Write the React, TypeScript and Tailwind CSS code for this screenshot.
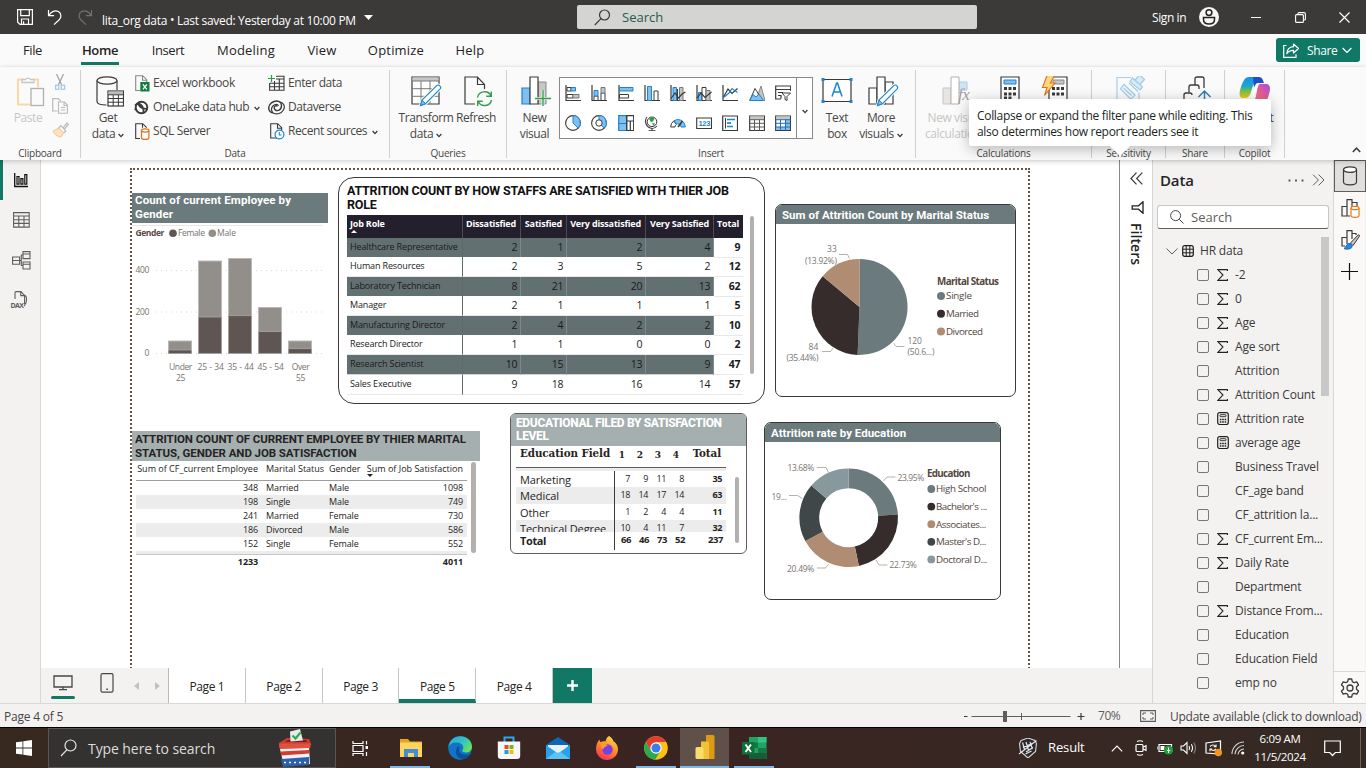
import React from "react";

type Kids = { children?: React.ReactNode };

function Svg({ w, h, vb, className = "", children }: { w: number; h: number; vb?: string; className?: string } & Kids) {
  return (
    <svg width={w} height={h} viewBox={vb ?? `0 0 ${w} ${h}`} fill="none" className={`block shrink-0 ${className}`}>
      {children}
    </svg>
  );
}

const INK = "#3b3a39";
const BLUE = "#1a86d0";
const SKY = "#83beec";

function Chevron({ className = "" }: { className?: string }) {
  return (
    <Svg w={6} h={5} className={className}>
      <path d="M.6 1 3 3.6 5.4 1" stroke={INK} strokeWidth="1.3" />
    </Svg>
  );
}

/* ---------- title bar ---------- */

function TitleBar() {
  return (
    <header className="flex h-[34px] shrink-0 items-center bg-[#3b3a39] text-white">
      <Svg w={16} h={16} className="ml-[17px]">
        <path d="M.6.6h14.8v14.8H3L.6 13zM3.7.6v6h8.6v-6M4.5 15.4V10h7v5.4M6.6 12.2v3" stroke="#fff" strokeWidth="1.2" />
      </Svg>
      <Svg w={16} h={16} className="ml-[14px]">
        <path d="M1.5 1v5.6h5.6M1.8 6.4C4 2.6 8 .6 11.4 2.6c3 1.900 3.300 5.700.8 8.100L7 15.600" stroke="#fff" strokeWidth="1.2" />
      </Svg>
      <Svg w={16} h={16} className="ml-[14px]">
        <path d="M14.500 1v5.600H8.900M14.200 6.400C12 2.600 8 .6 4.600 2.600c-3 1.900-3.300 5.700-.8 8.100L9 15.600" stroke="#737170" strokeWidth="1.200" />
      </Svg>
      <span className="mt-[8px] ml-[9px] w-[255px] text-[12px] tracking-[-0.025em] whitespace-nowrap">
        lita_org data <span className="relative -top-px">•</span> Last saved: Yesterday at 10:00 PM
      </span>
      <Svg w={9} h={5} className="ml-[7px]">
        <path d="M0 0h9L4.500 5z" fill="#fff" />
      </Svg>
      <div className="ml-[204px] flex h-6 w-[400px] items-center rounded-[2px] bg-[#d4d4d2]">
        <Svg w={17} h={17} className="ml-[17px]">
          <circle cx="10.500" cy="6" r="5" stroke="#3b3a39" strokeWidth="1.200" />
          <path d="M7 9.700.8 16" stroke="#3b3a39" strokeWidth="1.200" />
        </Svg>
        <span className="mt-px ml-[11px] text-[13px] tracking-[0em] text-[#1f5c4d]">Search</span>
      </div>
      <span className="mt-[2px] ml-[175px] w-[37px] text-[12px] whitespace-nowrap">Sign in</span>
      <Svg w={20} h={20} className="ml-[10px]">
        <circle cx="10" cy="10" r="10" fill="#f6f5f4" />
        <circle cx="10" cy="5.600" r="2.900" stroke="#222" strokeWidth="1.500" />
        <path d="M4.500 10.500h11v2.200c0 2.600-2.400 4.200-5.500 4.200s-5.500-1.600-5.500-4.200z" stroke="#222" strokeWidth="1.500" />
      </Svg>
      <Svg w={10} h={10} className="ml-[32px]">
        <path d="M0 5.500h10" stroke="#fff" />
      </Svg>
      <Svg w={11} h={11} className="ml-[34px]">
        <rect x=".6" y="2.600" width="7.800" height="7.800" rx="1" stroke="#fff" strokeWidth="1.100" />
        <path d="M3 2.400V1.600q0-1 1-1h5q1.400 0 1.400 1.400V7q0 1-1.400 1" stroke="#fff" strokeWidth="1.100" />
      </Svg>
      <Svg w={11} h={11} className="ml-[33px]">
        <path d="M.5.5l10 10M10.500.5l-10 10" stroke="#fff" strokeWidth="1.200" />
      </Svg>
    </header>
  );
}

/* ---------- ribbon ---------- */

const ribbonTabs: [string, string][] = [
  ["File", "w-[35px] ml-[15px]"],
  ["Home", "w-[38px] ml-[31px] font-semibold"],
  ["Insert", "w-[46px] ml-[26px]"],
  ["Modeling", "w-[70px] ml-[20px] tracking-[0.015em]"],
  ["View", "w-[40px] ml-[21px] tracking-[0.015em]"],
  ["Optimize", "w-[66px] ml-[21px] tracking-[0.015em]"],
  ["Help", "w-[40px] ml-[21px] tracking-[0.015em]"],
];

function RibbonTabs() {
  return (
    <nav className="flex h-[33px] shrink-0 items-stretch bg-[#fafafa] text-[13px] text-[#242424]">
      {ribbonTabs.map(([t, c]) => (
        <div key={t} className={`flex flex-col items-center whitespace-nowrap ${c}`}>
          <span className="mt-[6px] leading-5">{t}</span>
          {t === "Home" && <span className="mt-[2px] h-[3px] w-[38px] bg-[#117865]" />}
        </div>
      ))}
      <div className="mt-1 mr-[6px] ml-auto flex h-6 w-[84px] items-center rounded-[3px] bg-[#117865] text-[12px] text-white">
        <Svg w={17} h={15} className="ml-[7px]">
          <path d="M3.500 2.500H.7v11.800H13v-3" stroke="#fff" strokeWidth="1.200" />
          <path d="M10.500 1l5 4.500-5 4.500V7.400C7 7.300 5.200 8.500 3.800 10.700 4 7 6.300 4 10.500 3.700z" stroke="#fff" strokeWidth="1.200" strokeLinejoin="round" />
        </Svg>
        <span className="mt-[2px] ml-[7px] w-[31px]">Share</span>
        <Svg w={10} h={7} className="ml-[4px]">
          <path d="M.6 1 5 5.500 9.400 1" stroke="#fff" strokeWidth="1.200" />
        </Svg>
      </div>
    </nav>
  );
}

function Group({ label, className, children }: { label: string; className: string } & Kids) {
  return (
    <section className={`flex h-[88px] shrink-0 flex-col border-r border-[#d2d0ce] ${className}`}>
      <div className="flex h-[79px] items-start">{children}</div>
      <div className="text-center text-[10px] leading-[9px] tracking-[-0.02em] text-[#484644]">{label}</div>
    </section>
  );
}

function Big({ icon, lines, chevron, className }: { icon: React.ReactNode; lines: string[]; chevron?: boolean; className: string }) {
  return (
    <div className={`flex shrink-0 flex-col items-center pt-[6px] text-[12px] leading-4 text-[#484644] ${className}`}>
      <div className="flex h-[34px] items-start">{icon}</div>
      {lines.map((l, i) => (
        <span key={l} className="flex items-center whitespace-nowrap">
          {l}
          {chevron && i === lines.length - 1 && <Chevron className="mt-[3px] ml-[3px]" />}
        </span>
      ))}
    </div>
  );
}

function Row({ icon, text, chevron, wide }: { icon: React.ReactNode; text: string; chevron?: boolean; wide?: boolean }) {
  return (
    <div className="flex h-6 items-center text-[12px] whitespace-nowrap text-[#484644]">
      <span className={`flex items-center ${wide ? "w-[20px]" : "w-[18px]"}`}>{icon}</span>
      <span>{text}</span>
      {chevron && <Chevron className="mt-[2px] ml-[5px]" />}
    </div>
  );
}

const PasteIcon = (
  <Svg w={28} h={31}>
    <path d="M6 3.500H1v25h12M17 3.500h4v8" stroke="#fad7a5" strokeWidth="2" />
    <path d="M5 6.500v-3h3.500a3 3 0 0 1 5 0H17v3z" stroke="#c8c6c4" strokeWidth="1.300" />
    <rect x="14" y="12.500" width="12.500" height="17" fill="#fafafa" stroke="#b3b0ad" strokeWidth="1.300" />
  </Svg>
);

function ClipboardGroup() {
  return (
    <Group label="Clipboard" className="w-[81px]">
      <div className="ml-[16px] flex w-[30px] flex-col items-center pt-[6px]">
        {PasteIcon}
        <span className="mt-px -ml-[6px] text-[12px] leading-5 text-[#c8c6c4]">Paste</span>
      </div>
      <div className="ml-[6px] flex flex-col gap-2 pt-[4px]">
        <Svg w={16} h={16}>
          <path d="M4.500 0l5.200 11M11.500 0 6.300 11" stroke="#a19f9d" strokeWidth="1.200" />
          <rect x="3.600" y="11.300" width="3.300" height="4" stroke="#a6cbe9" strokeWidth="1.300" />
          <rect x="9.300" y="11.300" width="3.300" height="4" stroke="#a6cbe9" strokeWidth="1.300" />
        </Svg>
        <Svg w={16} h={16}>
          <path d="M5.500 13H.7V.7h5.500L9 3.500" stroke="#bdbbb9" strokeWidth="1.200" />
          <path d="M6.500 4h6l2.900 3v8.300H6.500zM12 4v3.500h3.400M8.800 9.500h4.500M8.800 12h4.500" stroke="#bdbbb9" strokeWidth="1.100" />
        </Svg>
        <Svg w={17} h={16}>
          <path d="M1 9l6-3 4.500 5L9 15C5 14.800 2.400 12.500 1 9z" fill="#fde3c4" stroke="#f3c291" />
          <path d="M6.500 6 8.800 3.700l5 5.200-2.300 2.200M11 5.800 15 1l1.300 1.300L12.500 7" stroke="#bdbbb9" strokeWidth="1.200" />
        </Svg>
      </div>
    </Group>
  );
}

const docPath = "M8 15H.7V.7h7l4 4V7M7.500.7v4.500H12";

function DataGroup() {
  return (
    <Group label="Data" className="w-[309px]">
      <Big
        className="ml-[4px] w-[46px]"
        lines={["Get", "data"]}
        chevron
        icon={
          <Svg w={28} h={31} className="ml-[4px]">
            <ellipse cx="11" cy="4.500" rx="10" ry="3.700" stroke={INK} strokeWidth="1.200" />
            <path d="M1 4.500v21c0 2 4 3.500 9.500 3.500M21 4.500V14" stroke={INK} strokeWidth="1.200" />
            <rect x="12" y="15" width="15.500" height="15" fill="#fff" stroke={INK} strokeWidth="1.200" />
            <rect x="12.500" y="15.500" width="14.500" height="3" fill="#bdbbb9" />
            <path d="M12 18.800h15.500M12 22.500h15.500M12 26.200h15.500M17.200 19v11M22.400 19v11" stroke={INK} />
          </Svg>
        }
      />
      <div className="ml-[4px] flex w-[133px] flex-col pt-px">
        <Row
          text="Excel workbook"
          icon={
            <Svg w={15} h={17}>
              <path d="M5 15.500H.7V.7h7l4 4V7M7.500.7v4.500H12" stroke="#8a8886" strokeWidth="1.100" />
              <rect x="5.300" y="7" width="9.200" height="9.500" fill="#107c41" />
              <path d="M7.900 9.300l4 5M11.900 9.300l-4 5" stroke="#fff" strokeWidth="1.300" />
            </Svg>
          }
        />
        <Row
          text="OneLake data hub"
          chevron
          icon={
            <Svg w={15} h={15} className="-ml-px">
              <circle cx="7.500" cy="7.500" r="5.800" stroke={INK} strokeWidth="1.900" />
              <path d="M1 5.500C4 2 10 4 9.500 13M4 3.500c2 4 5 6 9.800 5M.5 9l2.500 1" stroke={INK} strokeWidth="1.700" />
            </Svg>
          }
        />
        <Row
          text="SQL Server"
          icon={
            <Svg w={15} h={17}>
              <path d="M5 15.500H.7V.7h7l4 4M7.500.7v4" stroke={INK} strokeWidth="1.100" />
              <path d="M6.500 7.500v7.200c0 1 1.600 1.700 3.700 1.700s3.700-.7 3.700-1.700V7.500" fill="#fff" stroke="#d9731a" strokeWidth="1.200" />
              <ellipse cx="10.200" cy="7.500" rx="3.700" ry="1.600" fill="#fff" stroke="#d9731a" strokeWidth="1.200" />
            </Svg>
          }
        />
      </div>
      <div className="flex flex-col pt-px">
        <Row
          wide
          text="Enter data"
          icon={
            <Svg w={17} h={16}>
              <path d="M8 1.200h8v14H1.600V8M8 4h8M2 8.200h14M2 11.700h14M6.500 6v9M11.300 4v11" stroke={INK} strokeWidth="1.100" />
              <path d="M3.500 0v7M0 3.500h7" stroke="#2f9e44" strokeWidth="1.200" />
            </Svg>
          }
        />
        <Row
          wide
          text="Dataverse"
          icon={
            <Svg w={17} h={15}>
              <path d="M5 12.800C1 12.500-.3 8.300 1.600 5 3.600 1.500 8 .2 11.300 1.700c3 1.500 3 6.800-.3 8.500-2.300 1-4.800 0-4.800-2.600 0-1.700 2.300-2.700 3.300-1.300" stroke={INK} strokeWidth="1.400" />
              <path d="M12 2.200c4 .3 5.300 4.500 3.400 7.800-2 3.500-6.400 4.800-9.700 3.300-2.600-1.300-3-5.300-.6-7.500 2-2 4.600-2 5.400 0" stroke={INK} strokeWidth="1.200" />
            </Svg>
          }
        />
        <Row
          wide
          text="Recent sources"
          chevron
          icon={
            <Svg w={15} h={17} className="ml-[2px]">
              <path d={docPath} stroke={INK} strokeWidth="1.100" />
              <circle cx="9.500" cy="11.500" r="4.400" fill="#fff" stroke={BLUE} strokeWidth="1.200" />
              <path d="M9.300 9v3h2.300" stroke={BLUE} strokeWidth="1.100" />
            </Svg>
          }
        />
      </div>
    </Group>
  );
}

const Pencil = (
  <g>
    <path d="M9.500 29.500l1.500-5.500L25.500 9.800c1-1 2.500-1 3.400 0 1 1 1 2.300 0 3.300L14.500 27.700z" fill="#fff" stroke="#fafafa" strokeWidth="3" />
    <path d="M9.500 29.500l1.500-5.500L25.500 9.800c1-1 2.500-1 3.400 0 1 1 1 2.300 0 3.300L14.500 27.700z" fill="#fff" stroke={BLUE} strokeWidth="1.100" />
    <path d="M9.500 29.500l1.500-5.500 3.500 3.700z" fill={SKY} stroke={BLUE} />
  </g>
);

function QueriesGroup() {
  return (
    <Group label="Queries" className="w-[117px]">
      <Big
        className="ml-[5px] w-[62px]"
        lines={["Transform", "data"]}
        chevron
        icon={
          <Svg w={31} h={31}>
            <path d="M1 1h27v27H1z" fill="#fff" stroke={INK} strokeWidth="1.200" />
            <path d="M1.500 1.500h26v3.500h-26z" fill="#c8c6c4" />
            <path d="M1 5h27M1 12.700h27M1 20.300h27M10 5v23M19 5v23" stroke="#7a7876" />
            {Pencil}
          </Svg>
        }
      />
      <Big
        className="-ml-[3px] w-[44px]"
        lines={["Refresh"]}
        icon={
          <Svg w={30} h={31} className="ml-[5px]">
            <path d="M11 28H1V1h12.500l7 7.500V13M13.500 1v7.500h7" stroke={INK} strokeWidth="1.200" />
            <path d="M13.500 21.500c1.300-7 11-7.500 13.300-1.700M27.500 24c-1.300 6.500-10.500 7.500-13.300 1.500M27.300 15.500v4.800h-5M13.700 30v-4.800h5" stroke="#3a9a4e" strokeWidth="1.400" />
          </Svg>
        }
      />
    </Group>
  );
}

const axis = <path d="M1 0v15.500h15" stroke={INK} strokeWidth="1.200" />;
const gallery: React.ReactNode[] = [
  <>{axis}<path d="M2 2.500h4v3.500H2z" fill="#fff" stroke={INK} /><path d="M6 2.500h4.500v3.500H6z" fill={SKY} stroke={BLUE} /><path d="M2 9.500h6V13H2z" fill="#fff" stroke={INK} /><path d="M8 9.500h6V13H8z" fill="#c8c6c4" stroke="#7a7876" /></>,
  <>{axis}<path d="M3 11h4v4.500H3z" fill="#fff" stroke={INK} /><path d="M3 5.500h4V11H3z" fill={SKY} stroke={BLUE} /><path d="M10 8h4v7.500h-4z" fill="#fff" stroke={INK} /><path d="M10 2.500h4V8h-4z" fill="#c8c6c4" stroke="#7a7876" /></>,
  <>{axis}<path d="M1.500 2.500H15V6H1.500z" fill={SKY} stroke={BLUE} /><path d="M1.500 9.500h9V13h-9z" fill="#fff" stroke={INK} /></>,
  <>{axis}<path d="M3.500 1.500h4v14h-4z" fill={SKY} stroke={BLUE} /><path d="M10 6h4v9.500h-4z" fill="#fff" stroke={INK} /></>,
  <>{axis}<path d="M3 2.500h3.500v13H3z" fill={SKY} stroke={BLUE} /><path d="M9.500 2.500H13v13H9.500z" fill="#c8c6c4" stroke="#7a7876" /><path d="M1 13.500 5 8l3.500 5L12 9l3.500-2" stroke={INK} strokeWidth="1.200" /><path d="M7.500 4v11" stroke={INK} /></>,
  <>{axis}<path d="M2.500 7.500H6v8H2.500z" fill={SKY} stroke={BLUE} /><path d="M6 2.500h4v13H6z" fill="#fff" stroke={INK} /><path d="M10 5.500h4v10h-4z" fill="#c8c6c4" stroke="#7a7876" /><path d="M1 13 5 8l4 4.500L15.500 7" stroke={INK} strokeWidth="1.200" /></>,
  <>{axis}<path d="M1.500 12 6 4l4 4.500 5.500-5" stroke={INK} strokeWidth="1.200" /><path d="M1.500 12.500 7 8l3-4.500 5.500 4" stroke={BLUE} strokeWidth="1.200" /></>,
  <><path d="M7 15.500 12 1l4 14.500z" fill="#c8c6c4" stroke="#8a8886" /><path d="M.7 15.500 6 3.500l4.500 7" stroke={INK} /><path d="M.7 15.500 4 9.500l3 2.500 3-3 4.500 6.500z" fill={SKY} stroke={BLUE} /></>,
  <><path d="M6 14H.7V1h15v5M.7 4.500h15M3 7.500h5M3 10.500h3v3" stroke={INK} strokeWidth="1.200" /><path d="M7 8h8.500L12 11.500v4l-2-1v-3z" fill="#fff" stroke={INK} /></>,
  <><circle cx="8" cy="8" r="7.400" fill="#fff" stroke={INK} strokeWidth="1.100" /><path d="M8 .6A7.400 7.400 0 0 1 13.200 13.200L8 8z" fill={SKY} stroke={BLUE} /></>,
  <><circle cx="8" cy="8" r="7.400" fill="#fff" stroke={INK} strokeWidth="1.100" /><path d="M8 .6A7.400 7.400 0 0 1 13.200 13.200L10 10A3 3 0 0 0 8 5z" fill={SKY} stroke={BLUE} /><circle cx="8" cy="8" r="3.200" fill="#fff" stroke={INK} /></>,
  <><path d="M.7.7h8v14.800h-8z" fill={SKY} stroke={BLUE} strokeWidth="1.200" /><path d="M.7 8.500h8" stroke={BLUE} /><path d="M8.700.7h7v14.800h-7zM8.700 6h7M12.300 6v9.500" stroke={INK} strokeWidth="1.200" /></>,
  <><circle cx="8" cy="6.800" r="4.800" fill="#fff" stroke={INK} /><path d="M5 4c2-2 4-2 5.500-.5L9 6.500 7 7zM8 8l3 .5-1.500 2.500z" fill="#2f9e44" /><path d="M3 2C.6 5 1.200 9.500 4 11.800c2.700 2 6.500 2 9-.8M8 13v2.500M4.500 15.700h7" stroke={INK} strokeWidth="1.100" /></>,
  <><path d="M.7 12a7.300 7.300 0 0 1 3-6l2.600 3.500A3.500 3.500 0 0 0 5 12z" fill="#fff" stroke={INK} /><path d="M4 5.700A7.300 7.300 0 0 1 15.300 12H11A3.500 3.500 0 0 0 6.300 9z" fill={SKY} stroke={BLUE} /><path d="M8 12 12.500 6" stroke={INK} strokeWidth="1.600" /></>,
  <><path d="M.7 3h14.800v10.500H.7z" fill="#fff" stroke={INK} strokeWidth="1.100" /><text x="2.500" y="10.800" fontSize="7.500" fontWeight="700" fill={BLUE} textLength="11.500" className="font-['Liberation_Sans',sans-serif]">123</text></>,
  <><path d="M.7 1h14.800v14.500H.7z" fill="#fff" stroke={INK} strokeWidth="1.200" /><path d="M3.500 3v10.500" stroke={INK} /><path d="M5 4.500h8M5 11.500h6" stroke={BLUE} strokeWidth="1.700" /><path d="M5 8h4" stroke={BLUE} strokeWidth="1.700" /></>,
  <><path d="M.7 1h14.800v14.500H.7z" fill="#fff" stroke={INK} strokeWidth="1.200" /><path d="M1.200 1.500H15v2.700H1.200z" fill="#c8c6c4" /><path d="M.7 4.700h14.800M.7 8.300h14.800M.7 12h14.800M5.500 4.700v11M10.500 4.700v11" stroke="#5c5a58" /></>,
  <><path d="M.7 1h14.800v14.500H.7z" fill="#fff" stroke={INK} strokeWidth="1.200" /><path d="M1.200 1.500H15v2.700H1.200z" fill="#c8c6c4" /><path d="M10.500 4.500H15V15H10.500zM1.200 12H15v3H1.200z" fill={SKY} /><path d="M.7 4.700h14.800M.7 8.300h14.800M.7 12h14.800M5.500 4.700v11M10.500 4.700v11" stroke="#1f6fb2" /></>,
];

function InsertGroup() {
  return (
    <Group label="Insert" className="w-[409px]">
      <Big
        className="ml-[3px] w-[49px]"
        lines={["New", "visual"]}
        icon={
          <Svg w={31} h={31} className="ml-[4px]">
            <path d="M1 12h8v16H1z" fill={SKY} stroke={BLUE} strokeWidth="1.200" />
            <path d="M17 6h8v22h-8z" fill="#c8c6c4" stroke="#8a8886" />
            <path d="M9 1h8v27H9z" fill="#fff" stroke={INK} strokeWidth="1.200" />
            <path d="M22 14v16M14 22.500h16" stroke="#fafafa" strokeWidth="3" strokeOpacity=".8" />
            <path d="M22 14v16M14 22.500h16" stroke="#2f9e44" strokeWidth="1.300" />
          </Svg>
        }
      />
      <div className="mt-[7px] flex h-[62px] w-[254px] shrink-0 border border-[#8a8886] bg-white">
        <div className="grid w-[237px] shrink-0 grid-cols-9 gap-y-px border-r border-[#8a8886] pt-px">
          {gallery.map((g, i) => (
            <span key={i} className="flex h-[28px] items-center justify-center">
              <Svg w={16} h={16}>{g}</Svg>
            </span>
          ))}
        </div>
        <div className="flex flex-1 items-center justify-center pt-[6px]">
          <Chevron />
        </div>
      </div>
      <Big
        className="w-[48px]"
        lines={["Text", "box"]}
        icon={
          <Svg w={32} h={31}>
            <path d="M2 3.500h28v22H2z" fill="#fff" stroke={INK} strokeWidth="1.200" />
            <path d="M11 20.500 15.700 7h.8L21 20.500M12.500 16h7" stroke={BLUE} strokeWidth="1.500" />
            <path d="M.5 2h3v3h-3zM28.500 2h3v3h-3zM.5 24h3v3h-3zM28.500 24h3v3h-3z" fill={BLUE} />
          </Svg>
        }
      />
      <Big
        className="-ml-[4px] w-[48px]"
        lines={["More", "visuals"]}
        chevron
        icon={
          <Svg w={31} h={31} className="ml-[4px]">
            <path d="M1 12h8v16H1zM17 6h8v22h-8z" fill="#fff" stroke={INK} strokeWidth="1.200" />
            <path d="M9 1h8v27H9z" fill="#fff" stroke={INK} strokeWidth="1.200" />
            {Pencil}
          </Svg>
        }
      />
    </Group>
  );
}

function CalcGroups() {
  return (
    <>
      <Group label="Calculations" className="w-[176px]">
        <Big
          className="ml-[5px] w-[74px] [&>span]:-ml-[5px] [&>span]:text-[#c8c6c4]"
          lines={["New visual", "calculations"]}
          icon={
            <Svg w={29} h={31} className="-ml-[4px]">
              <path d="M1 12h8v16H1z" fill="#e6e5e4" stroke="#c8c6c4" />
              <path d="M17 6h8v8h-8z" fill="#cfe4f5" stroke="#a6cbe9" />
              <path d="M9 1h8v27H9z" fill="#fff" stroke="#b3b0ad" />
              <text x="16" y="24" fontSize="17" fontStyle="italic" fill="#a19f9d" className="font-['Liberation_Serif',serif]">fx</text>
            </Svg>
          }
        />
        <Big
          className="w-[30px]"
          lines={[]}
          icon={
            <Svg w={20} h={31}>
              <path d="M1 1h18v28H1z" fill="#fff" stroke={INK} strokeWidth="1.200" />
              <path d="M4 4h12v4H4z" fill={SKY} stroke={BLUE} />
              <path d="M4 12.500h3M8.500 12.500h3M13 12.500h3M4 18h3M8.500 18h3M13 18h3M4 22h3M8.500 22h3" stroke={INK} strokeWidth="2.800" />
            </Svg>
          }
        />
        <Big
          className="-ml-px w-[62px]"
          lines={[]}
          icon={
            <Svg w={28} h={31}>
              <path d="M8 1h18v28H8z" fill="#fff" stroke={INK} strokeWidth="1.200" />
              <path d="M12 4h11v4H12z" fill="#c8c6c4" stroke="#8a8886" />
              <path d="M11 12.500h3M15.500 12.500h3M20 12.500h3M11 18h3M15.500 18h3M20 18h3" stroke={INK} strokeWidth="2.800" />
              <path d="M6-.5h7.500L9.500 7H14L3.500 19.500 6 11.500H1.500z" fill="#fcd57c" stroke="#d9731a" strokeWidth="1.100" />
            </Svg>
          }
        />
      </Group>
      <Group label="Sensitivity" className="w-[74px]">
        <Big
          className="w-[74px]"
          lines={[]}
          icon={
            <Svg w={30} h={31} className="ml-[4px]">
              <path d="M15 1.500H1v27h22v-12" stroke="#a6d0ea" strokeWidth="1.200" />
              <path d="M8 8.500l11 10.500-4 4.500L4.500 13zM7.500 12l8 7.500" stroke="#9fcbe6" fill="#eef6fb" strokeWidth="1.200" />
              <path d="M14 5.500 16.500 2l10 9L24 14zM19 4l4.500-5 5 4.500-4.500 5M13 7l9 8.500" stroke="#9fcbe6" fill="#d8ebf6" strokeWidth="1.200" />
            </Svg>
          }
        />
      </Group>
      <Group label="Share" className="w-[59px]">
        <Big
          className="w-[59px]"
          lines={[]}
          icon={
            <Svg w={28} h={31} className="ml-[3px]">
              <path d="M1 24v-5q0-2 2-2h4q2 0 2 2M6 16V11q0-2 2-2h6q2 0 2 2v2M12 8.500V3q0-2 2-2h5q2 0 2 2v9" stroke={INK} strokeWidth="1.300" />
              <path d="M21.500 28V15M15.500 21l6-6 6 6" stroke="#2b7cb8" strokeWidth="1.500" />
            </Svg>
          }
        />
      </Group>
      <Group label="Copilot" className="w-[60px]">
        <Big
          className="w-[60px]"
          lines={["Copilot"]}
          icon={
            <Svg w={32} h={30} className="mt-px">
              <defs>
                <linearGradient id="cpA" x1="0" y1="0" x2="0" y2="1">
                  <stop offset="0" stopColor="#1b8ff0" /><stop offset=".45" stopColor="#1fa7c8" /><stop offset=".65" stopColor="#6fbf4a" /><stop offset="1" stopColor="#f5c518" />
                </linearGradient>
                <linearGradient id="cpB" x1="1" y1="0" x2="0" y2="1">
                  <stop offset="0" stopColor="#a34bd8" /><stop offset=".4" stopColor="#e05a9c" /><stop offset="1" stopColor="#f7894a" />
                </linearGradient>
              </defs>
              <path d="M10 0h10c-4 1-6 9-8 15-1 4-3 6-6 6H3c-3-1-3-5-1-11S6 0 10 0z" fill="url(#cpA)" />
              <path d="M14 0h6c3 0 4 3 5 6h-6c-2 0-3 2-4 5z" fill="#1f4fc8" />
              <path d="M19 7h9c3 1 4 4 2 10-2 8-4 11-8 11H12c3-1 4-5 5-11s1-9 2-10z" fill="url(#cpB)" />
              <path d="M19 7c-2 0-3 2-3.800 4.500L12.500 21h3.800c1.500-4 1.700-12 4.200-14z" fill="#fff" />
            </Svg>
          }
        />
      </Group>
    </>
  );
}

function Ribbon() {
  return (
    <div className="relative z-20 flex h-[93px] shrink-0 bg-[#fafafa] pt-[3px] shadow-[0_1px_5px_rgba(0,0,0,0.22)]">
      <ClipboardGroup />
      <DataGroup />
      <QueriesGroup />
      <InsertGroup />
      <CalcGroups />
      <Svg w={9} h={6} className="mt-[77px] ml-[67px]">
        <path d="M.8 5 4.500 1.200 8.200 5" stroke={INK} strokeWidth="1.500" />
      </Svg>
      <div className="absolute top-[32px] left-[969px] h-[47px] w-[302px] rounded-[2px] bg-white pt-[9px] pl-[8px] text-[12px] leading-4 tracking-[-0.026em] whitespace-nowrap text-[#201f1e] shadow-[0_3px_14px_rgba(0,0,0,0.28)]">
        Collapse or expand the filter pane while editing. This
        <br />
        also determines how report readers see it
        <Svg w={22} h={11} className="absolute top-[46px] left-[140px]">
          <path d="M0 0h22L11 11z" fill="#fff" />
        </Svg>
      </div>
    </div>
  );
}

/* ---------- left rail ---------- */

function LeftRail() {
  const g = "#605e5c";
  return (
    <aside className="flex w-[41px] shrink-0 flex-col border-r border-[#dad8d6] bg-[#f3f2f1]">
      <div className="flex h-[40px] items-center border-l-[3px] border-[#117865] pl-[11px]">
        <Svg w={14} h={15}>
          <path d="M.7 0v13.500H14" stroke="#111" strokeWidth="1.300" />
          <path d="M3 3.500h2v7.700H3zM6.900 5.700h2v5.500h-2zM10.800 1.700h2v9.500h-2z" stroke="#111" strokeWidth="1.200" />
        </Svg>
      </div>
      <Svg w={17} h={16} className="mt-[12px] ml-[13px]">
        <path d="M.6.6h15.600v14.500H.6zM.6 4h15.600M.6 7.700h15.600M.6 11.400h15.600M5.800 4v11M11 4v11" stroke={g} strokeWidth="1.100" />
      </Svg>
      <Svg w={19} h={19} className="mt-[23px] ml-[12px]">
        <path d="M.6 6h7v7.200h-7zM.6 9.500h7M11 .6h7v7h-7zM11 3h7M11 11h7v7h-7zM11 13.300h7M7.600 9.500H9.300V4H11M9.300 9.500v5H11" stroke={g} strokeWidth="1.100" />
      </Svg>
      <Svg w={20} h={18} className="mt-[21px] ml-[10px]">
        <path d="M5 8V1.600q0-1 1-1h5l3.600 4V13M10.700.6v4h4M14.600 4c1.500 1 2 2 2 4 0 3-.5 5-2.500 7" stroke={g} strokeWidth="1.100" />
        <text x=".5" y="16.500" fontSize="7" fontWeight="700" fill={g} textLength="13">DAX</text>
      </Svg>
    </aside>
  );
}

/* ---------- report visuals ---------- */

const bars = [
  { x: 168.500, top: 341, mid: 350, label: ["Under", "25"] },
  { x: 198.500, top: 261, mid: 317, label: ["25 - 34"] },
  { x: 228.500, top: 258.500, mid: 315.700, label: ["35 - 44"] },
  { x: 258.500, top: 307.500, mid: 331.500, label: ["45 - 54"] },
  { x: 288.500, top: 341, mid: 348.700, label: ["Over", "55"] },
];

function GenderChart() {
  return (
    <div className="absolute top-[23px] left-0 w-[196px]">
      <div className="h-[30px] bg-[#6b7a7c] px-[3px] font-[Roboto,sans-serif] text-[11.500px] leading-[14px] font-bold tracking-[0.01em] text-white">
        Count of current Employee by
        <br />
        Gender
      </div>
      <Svg w={196} h={170} vb="132 223 196 170">
        <path d="M132 225.500h190" stroke="#e9e7e5" />
        <g fontSize="8.500" fill="#777370">
          <text x="135.500" y="236" fontWeight="700" fill="#5b4a45" textLength="28.500">Gender</text>
          <circle cx="173" cy="233.200" r="3.800" fill="#5f5552" />
          <text x="178" y="236" textLength="26.500">Female</text>
          <circle cx="212.300" cy="233.200" r="3.800" fill="#928e8a" />
          <text x="217" y="236" textLength="18.500">Male</text>
          {[["400", 270.500, 135.500], ["200", 312, 135.500], ["0", 353.500, 144.500]].map(([t, y, x]) => (
            <g key={t}>
              <text x={x} y={Number(y) + 2.500}>{t}</text>
              <path d={`M156 ${y}h166`} stroke="#dcdad8" strokeDasharray="1 4" />
            </g>
          ))}
        </g>
        {bars.map((b) => (
          <g key={b.x}>
            <rect x={b.x} y={b.top} width="23" height={353.500 - b.top} fill="#928e8a" stroke="#bcb9b6" />
            <rect x={b.x} y={b.mid} width="23" height={353.500 - b.mid} fill="#5f5552" stroke="#aaa7a4" strokeWidth=".8" />
            {b.label.map((l, i) => (
              <text
                key={l}
                x={b.x + 12}
                y={370 + i * 11}
                textAnchor="middle"
                fontSize="8.500"
                fill="#777370"
                textLength={l.length === 7 ? 26 : undefined}
              >
                {l}
              </text>
            ))}
          </g>
        ))}
      </Svg>
    </div>
  );
}

const roles: [string, number[]][] = [
  ["Healthcare Representative", [2, 1, 2, 4, 9]],
  ["Human Resources", [2, 3, 5, 2, 12]],
  ["Laboratory Technician", [8, 21, 20, 13, 62]],
  ["Manager", [2, 1, 1, 1, 5]],
  ["Manufacturing Director", [2, 4, 2, 2, 10]],
  ["Research Director", [1, 1, 0, 0, 2]],
  ["Research Scientist", [10, 15, 13, 9, 47]],
  ["Sales Executive", [9, 18, 16, 14, 57]],
];
const roleCols = "grid grid-cols-[116px_58px_46px_79px_68px_29px]";

function RoleTable() {
  return (
    <div className="absolute top-[7px] left-[206px] h-[227px] w-[427px] rounded-[16px] border border-[#3b3a39] bg-white pt-[6px] pl-[8px]">
      <div className="font-[Roboto,sans-serif] text-[12.500px] leading-[14px] font-bold tracking-[-0.017em] whitespace-nowrap text-[#111]">
        ATTRITION COUNT BY HOW STAFFS ARE SATISFIED WITH THIER JOB
        <br />
        ROLE
      </div>
      <div className="mt-[3px] flex">
        <div className="w-[396px]">
          <div className={`${roleCols} h-[22.500px] bg-[#231f2d] text-[9px] leading-[17px] font-bold tracking-[-0.02em] whitespace-nowrap text-white`}>
            <span className="flex flex-col border-r border-[#4e4a58] pl-[3px]">
              Job Role
              <Svg w={6} h={3} className="-mt-[2px] ml-px"><path d="M0 3h6L3 0z" fill="#fff" /></Svg>
            </span>
            {["Dissatisfied", "Satisfied", "Very dissatisfied", "Very Satisfied"].map((h) => (
              <span key={h} className="flex justify-end border-r border-[#4e4a58] pr-[4px]">{h}</span>
            ))}
            <span className="flex justify-end pr-[4px]">Total</span>
          </div>
          {roles.map(([name, vals], i) => (
            <div key={name} className={`${roleCols} h-[19.600px] text-[#1a1a1a]`}>
              <span className={`border-r border-b border-r-[#5d6a6c] pl-[3px] text-[9px] leading-[17px] tracking-[-0.015em] whitespace-nowrap ${i % 2 ? "border-b-[#e8e8e8] bg-white" : "border-b-[#d0d4d4] bg-[#637072]"}`}>{name}</span>
              {vals.slice(0, 4).map((v, k) => (
                <span key={k} className={`border-r border-b pr-[3px] text-right text-[10.500px] leading-[19px] ${i % 2 ? "border-r-white border-b-[#e8e8e8] bg-white" : "border-r-[#7d898a] border-b-[#d0d4d4] bg-[#637072]"}`}>{v}</span>
              ))}
              <span className="border-b border-[#e8e8e8] pr-[3px] text-right text-[10.500px] leading-[19px] font-bold">{vals[4]}</span>
            </div>
          ))}
        </div>
        <div className="mt-px ml-[7px] h-[158px] w-[4px] rounded-full bg-[#b3b0ad]" />
      </div>
    </div>
  );
}

function arc(cx: number, cy: number, R: number, r: number, a: number, b: number) {
  const p = (rad: number, t: number) => {
    const th = t * 2 * Math.PI;
    return `${(cx + rad * Math.sin(th)).toFixed(2)} ${(cy - rad * Math.cos(th)).toFixed(2)}`;
  };
  const big = b - a > 0.5 ? 1 : 0;
  return `M${p(R, a)}A${R} ${R} 0 ${big} 1 ${p(R, b)}L${p(r, b)}A${r} ${r} 0 ${big} 0 ${p(r, a)}Z`;
}

function Card({ title, className, children }: { title: string; className: string } & Kids) {
  return (
    <div className={`absolute overflow-hidden rounded-[7px] border border-[#3b3a39] bg-white ${className}`}>
      <div className="h-[19px] bg-[#6b7a7c] pl-[6px] font-[Roboto,sans-serif] text-[11.500px] leading-[20px] font-bold tracking-[0.001em] whitespace-nowrap text-white">
        {title}
      </div>
      {children}
    </div>
  );
}

function MaritalPie() {
  return (
    <Card title="Sum of Attrition Count by Marital Status" className="top-[34px] left-[643px] h-[193px] w-[241px]">
      <Svg w={239} h={172} vb="776 224 239 172">
        <path d={arc(859.500, 307, 48, 0, 0, 0.5063)} fill="#6b7a7c" />
        <path d={arc(859.500, 307, 48, 0, 0.5063, 0.8607)} fill="#352c2b" />
        <path d={arc(859.500, 307, 48, 0, 0.8607, 0.99999)} fill="#b08c73" />
        <path d="M839 254.500h8.500l2 4M822 351.500h8.500l2.500-3.500M893.500 343l2.500 3.500h8.500" stroke="#b9b0aa" />
        <g fontSize="8.500" fill="#7a7573">
          <text x="827" y="252" textLength="9.500">33</text>
          <text x="805" y="264" textLength="31.500">(13.92%)</text>
          <text x="808.500" y="350" textLength="9.500">84</text>
          <text x="786.500" y="361" textLength="31.500">(35.44%)</text>
          <text x="907.500" y="344" textLength="14">120</text>
          <text x="907.500" y="355" textLength="26.500">(50.6...)</text>
        </g>
        <text x="937" y="285" fontSize="9.800" fontWeight="700" fill="#54463f" textLength="61.500">Marital Status</text>
        {[["Single", 296, "#6b7a7c", 25.500], ["Married", 313.700, "#352c2b", 32.500], ["Divorced", 331.500, "#b08c73", 36.500]].map(([t, y, c, l]) => (
          <g key={t}>
            <circle cx="941" cy={y} r="4" fill={String(c)} />
            <text x="946" y={Number(y) + 3.300} fontSize="9.800" fill="#54463f" textLength={l}>{t}</text>
          </g>
        ))}
      </Svg>
    </Card>
  );
}

const eduSlices: [number, string, string, number][] = [
  [23.950, "#6b7a7c", "High School", 50],
  [22.730, "#352c2b", "Bachelor's ...", 51],
  [20.490, "#b08c73", "Associates...", 50],
  [19.150, "#3f4749", "Master's D...", 50],
  [13.680, "#87999d", "Doctoral D...", 51],
];

function EducationDonut() {
  let at = 0;
  return (
    <Card title="Attrition rate by Education" className="top-[252px] left-[632px] h-[178px] w-[237px]">
      <Svg w={235} h={157} vb="765 442 235 157">
        {eduSlices.map(([v, c]) => {
          const a = at;
          at += v / 100;
          return <path key={c} d={arc(848.700, 517.700, 49.300, 29.500, a, at)} fill={c} />;
        })}
        <path d="M817 467.500h9l2.500 5M789 495.500h8.500l5 3M817 568h8.500l3-4M883.500 481l3.500-4h8.500M876 560l3 5h8.500" stroke="#b9b0aa" />
        <g fontSize="8.500" fill="#7a7573">
          <text x="787.500" y="471" textLength="26.500">13.68%</text>
          <text x="771.500" y="499.500" textLength="15">19...</text>
          <text x="787" y="572" textLength="27">20.49%</text>
          <text x="897.500" y="481" textLength="26.500">23.95%</text>
          <text x="889.500" y="568" textLength="27">22.73%</text>
        </g>
        <text x="927" y="477" fontSize="9.800" fontWeight="700" fill="#54463f" textLength="43">Education</text>
        {eduSlices.map(([, c, t, l], i) => (
          <g key={t}>
            <circle cx="931.300" cy={489 + i * 17.600} r="3.900" fill={c} />
            <text x="936" y={492.300 + i * 17.700} fontSize="9.800" fill="#54463f" textLength={l}>{t}</text>
          </g>
        ))}
      </Svg>
    </Card>
  );
}

const statusRows = [
  ["348", "Married", "Male", "1098"],
  ["198", "Single", "Male", "749"],
  ["241", "Married", "Female", "730"],
  ["186", "Divorced", "Male", "586"],
  ["152", "Single", "Female", "552"],
];
const statusCols = "grid grid-cols-[126px_63px_38px_104px] [&>span]:px-[4px]";

function StatusTable() {
  return (
    <div className="absolute top-[261px] left-0 w-[348px]">
      <div className="h-[30px] bg-[#a5afb0] pt-px pl-[3px] font-[Roboto,sans-serif] text-[11.500px] leading-[14px] font-bold tracking-[-0.006em] whitespace-nowrap text-[#252423]">
        ATTRITION COUNT OF CURRENT EMPLOYEE BY THIER MARITAL
        <br />
        STATUS, GENDER AND JOB SATISFACTION
      </div>
      <div className="flex pl-[4px]">
        <div className="w-[331px] text-[9px] tracking-[-0.012em] whitespace-nowrap text-[#252423]">
          <div className={`${statusCols} h-[20px] border-b border-[#a19f9d] leading-[15px] tracking-[0.001em]`}>
            <span className="flex justify-end">Sum of CF_current Employee</span>
            <span>Marital Status</span>
            <span>Gender</span>
            <span className="flex flex-col items-end">
              Sum of Job Satisfaction
              <Svg w={6} h={3} className="-mt-[2px] mr-[90px]"><path d="M0 0h6L3 3z" fill="#252423" /></Svg>
            </span>
          </div>
          {statusRows.map((r, i) => (
            <div key={r[0]} className={`${statusCols} h-[14px] leading-[14px] ${i % 2 ? "bg-[#ececec]" : ""}`}>
              <span className="text-right">{r[0]}</span>
              <span>{r[1]}</span>
              <span>{r[2]}</span>
              <span className="text-right">{r[3]}</span>
            </div>
          ))}
          <div className="h-[4px] border-b border-[#c8c6c4] bg-[#ececec]" />
          <div className={`${statusCols} leading-[13px] font-bold`}>
            <span className="text-right">1233</span>
            <span />
            <span />
            <span className="text-right">4011</span>
          </div>
        </div>
        <div className="mt-px ml-[4px] h-[91px] w-[5px] rounded-full bg-[#b3b0ad]" />
      </div>
    </div>
  );
}

const fieldRows: [string, number[]][] = [
  ["Marketing", [7, 9, 11, 8, 35]],
  ["Medical", [18, 14, 17, 14, 63]],
  ["Other", [1, 2, 4, 4, 11]],
  ["Technical Degree", [10, 4, 11, 7, 32]],
];
const fieldCols = "grid grid-cols-[99px_19px_18px_18px_18px_38px]";

function FieldTable() {
  return (
    <div className="absolute top-[243px] left-[378px] h-[141px] w-[237px] overflow-hidden rounded-[6px] border border-[#605e5c] bg-white">
      <div className="h-[32px] bg-[#a5afb0] pt-[3px] pl-[5px] font-[Roboto,sans-serif] text-[12px] leading-[13px] font-extrabold tracking-[-0.03em] whitespace-nowrap text-white">
        EDUCATIONAL FILED BY SATISFACTION
        <br />
        LEVEL
      </div>
      <div className="flex">
        <div className="ml-[5px] w-[210px] whitespace-nowrap text-[#252423]">
          <div className={`${fieldCols} h-[22px] border-b border-[#605e5c] font-['DejaVu_Serif_Condensed','DejaVu_Serif',serif] text-[11.500px] leading-[15px] font-bold tracking-[-0.008em]`}>
            <span className="pl-[4px]">Education Field</span>
            {["1", "2", "3", "4"].map((n) => (
              <span key={n} className="pr-[9px] text-right text-[10px] leading-[17px]">{n}</span>
            ))}
            <span className="flex justify-end pr-[5px]">Total</span>
          </div>
          <div className="h-[64px] overflow-hidden">
            <div className="h-[3px] bg-[#ececec]" />
            {fieldRows.map(([n, v], i) => (
              <div key={n} className={`${fieldCols} h-[16.300px] ${i % 2 ? "bg-[#ececec]" : ""}`}>
                <span className="border-r border-[#3b3a39] pl-[4px] text-[11px] leading-[18px] tracking-[-0.01em]">{n}</span>
                {v.map((x, k) => (
                  <span key={k} className={`pr-[4px] text-right text-[9px] leading-[15px] ${k === 4 ? "font-bold" : ""}`}>{x}</span>
                ))}
              </div>
            ))}
          </div>
          <div className={`${fieldCols} h-[16px] font-bold`}>
            <span className="border-r border-[#3b3a39] pl-[4px] text-[11px] leading-[18px]">Total</span>
            {[66, 46, 73, 52, 237].map((x) => (
              <span key={x} className="pr-[3px] text-right text-[9.500px] leading-[15px]">{x}</span>
            ))}
          </div>
        </div>
        <div className="mt-[31px] ml-[9px] h-[66px] w-[4px] rounded-full bg-[#b3b0ad]" />
      </div>
    </div>
  );
}

function Canvas() {
  return (
    <div className="h-[508px] w-[1078px] shrink-0 overflow-hidden bg-white pt-[8px] pl-[89px]">
      <div className="relative h-[640px] w-[900px] border-2 border-dotted border-[#6b5344]">
        <GenderChart />
        <RoleTable />
        <MaritalPie />
        <StatusTable />
        <FieldTable />
        <EducationDonut />
      </div>
    </div>
  );
}

function FiltersPane() {
  return (
    <div className="flex w-[33px] shrink-0 flex-col items-center border-l border-[#8a8886] bg-white">
      <Svg w={13} h={13} className="mt-[12px]">
        <path d="M6.500.7.900 6.500l5.600 5.800M12.300.7 6.700 6.500l5.600 5.800" stroke={INK} strokeWidth="1.200" />
      </Svg>
      <Svg w={13} h={13} className="mt-[16px] ml-[3px]">
        <path d="M12 .8v11.400L7.500 8.200H1.200V4.800h6.300z" stroke="#201f1e" strokeWidth="1.300" />
      </Svg>
      <span className="mt-[9px] -ml-px text-[14px] leading-5 font-semibold tracking-[0.005em] text-[#252423] [writing-mode:vertical-rl]">Filters</span>
    </div>
  );
}

function PageTabs() {
  return (
    <div className="flex h-[35px] shrink-0 bg-[#f3f2f1] text-[12px] text-[#252423]">
      <div className="ml-[10px] flex w-6 flex-col items-center">
        <Svg w={20} h={16} className="mt-[7px] -ml-px">
          <path d="M1 1h18v11H1zM10 12v2.500M6 14.700h8" stroke="#484644" strokeWidth="1.300" />
        </Svg>
        <span className="mt-[5px] h-[3px] w-6 rounded-sm bg-[#117865]" />
      </div>
      <Svg w={14} h={20} className="mt-[5px] ml-[25px]">
        <rect x="1" y=".7" width="12" height="18.500" rx="1.500" stroke="#484644" strokeWidth="1.200" />
        <path d="M6.300 16.300h1.600" stroke="#484644" strokeWidth="1.600" />
      </Svg>
      <Svg w={27} h={8} className="mt-[14px] ml-[19px]">
        <path d="M6 0v8L1 4zM22 0v8l5-4z" fill="#c3c1bf" />
      </Svg>
      <div className="ml-[8px] flex border-l border-[#bdbbb9]">
        {["Page 1", "Page 2", "Page 3", "Page 5", "Page 4"].map((p) => (
          <div key={p} className={`flex w-[76.800px] items-center justify-center border-r border-[#c8c6c4] bg-white ${p === "Page 5" ? "border-b-4 border-b-[#117865] pt-[6px]" : "pt-[3px]"}`}>
            {p}
          </div>
        ))}
      </div>
      <div className="flex w-[39px] items-center justify-center bg-[#117865]">
        <Svg w={11} h={11}>
          <path d="M5.500 0v11M0 5.500h11" stroke="#fff" strokeWidth="2.400" />
        </Svg>
      </div>
    </div>
  );
}

/* ---------- data pane ---------- */

const fields: [string, "s" | "c" | ""][] = [
  ["-2", "s"], ["0", "s"], ["Age", "s"], ["Age sort", "s"], ["Attrition", ""], ["Attrition Count", "s"],
  ["Attrition rate", "c"], ["average age", "c"], ["Business Travel", ""], ["CF_age band", ""],
  ["CF_attrition la...", ""], ["CF_current Em...", "s"], ["Daily Rate", "s"], ["Department", ""],
  ["Distance From...", "s"], ["Education", ""], ["Education Field", ""], ["emp no", ""],
];

function DataPane() {
  return (
    <aside className="flex w-[181px] shrink-0 flex-col border-l border-[#d8d6d4] bg-[#f3f2f1]">
      <div className="flex h-[40px] items-center pl-[7px]">
        <span className="w-[40px] text-[15px] font-semibold tracking-[-0.01em] text-[#252423]">Data</span>
        <Svg w={16} h={3} className="ml-[88px]">
          <path d="M.5.500h2v2h-2zM7 .5h2v2H7zM13.500.5h2v2h-2z" fill="#605e5c" />
        </Svg>
        <Svg w={13} h={12} className="ml-[8px]">
          <path d="M1 .6 6.400 6 1 11.400M6.600.6 12 6l-5.400 5.400" stroke="#605e5c" />
        </Svg>
      </div>
      <div className="mt-[5px] ml-[4px] flex h-[24px] w-[172px] items-center rounded-[3px] border border-b-[#605e5c] border-[#c8c6c4] bg-white">
        <Svg w={14} h={14} className="ml-[12px]">
          <circle cx="5.600" cy="5.600" r="5" stroke="#484644" />
          <path d="M9.200 9.200l4.300 4.300" stroke="#484644" />
        </Svg>
        <span className="mt-px ml-[7px] text-[13px] tracking-[0em] text-[#605e5c]">Search</span>
      </div>
      <div className="relative mt-[10px] flex flex-col text-[12px] tracking-[-0.015em] text-[#3b3a39]">
        <div className="flex h-6 items-center pl-[13px]">
          <Svg w={12} h={7}>
            <path d="M.5.6 6 6 11.500.6" stroke="#605e5c" />
          </Svg>
          <Svg w={12} h={12} className="ml-[4px]">
            <rect x=".7" y=".7" width="10.600" height="10.600" rx="2" stroke="#201f1e" strokeWidth="1.200" />
            <path d="M4.200.7v10.600M7.800.7v10.600M.7 4.200h10.600M.7 7.800h10.600" stroke="#201f1e" />
          </Svg>
          <span className="ml-[6px]">HR data</span>
        </div>
        {fields.map(([f, k]) => (
          <div key={f} className="flex h-6 items-center pl-[44px] whitespace-nowrap">
            <span className="mb-px h-3 w-3 rounded-[2px] border border-[#797775]" />
            <span className="mb-px ml-[6px] flex w-[20px] justify-center pr-[5px]">
              {k === "s" && (
                <Svg w={11} h={12}>
                  <path d="M10.500 2V.6H.8L6 6 .8 11.400h9.700V10" stroke="#252423" strokeWidth="1.100" />
                </Svg>
              )}
              {k === "c" && (
                <Svg w={12} h={13}>
                  <rect x=".7" y=".7" width="10.600" height="11.800" rx="2" stroke="#201f1e" strokeWidth="1.200" />
                  <rect x="3" y="2.700" width="6" height="2" rx=".5" stroke="#201f1e" strokeWidth=".9" />
                  <path d="M2.800 7.500h1.600M5.200 7.500h1.600M7.600 7.500h1.600M2.800 10h1.600M5.200 10h1.600M7.600 10h1.600" stroke="#201f1e" strokeWidth="1.400" />
                </Svg>
              )}
            </span>
            <span>{f}</span>
          </div>
        ))}
        <span className="absolute top-[-2px] left-[168px] h-[159px] w-[8px] bg-[#c8c8c8]" />
      </div>
    </aside>
  );
}

function RightRail() {
  return (
    <aside className="flex w-8 shrink-0 flex-col items-center border-l border-[#dad8d6] bg-[#faf9f8]">
      <div className="flex h-8 w-8 items-center justify-center border border-[#605e5c] bg-[#e1dfdd]">
        <Svg w={16} h={20}>
          <ellipse cx="8" cy="3.600" rx="6.500" ry="2.800" fill="#fff" stroke={INK} strokeWidth="1.200" />
          <path d="M1.500 3.600v12.500c0 1.600 3 2.800 6.500 2.800s6.500-1.200 6.500-2.800V3.600" stroke={INK} strokeWidth="1.200" />
        </Svg>
      </div>
      <Svg w={19} h={19} className="mt-[7px] ml-px">
        <path d="M9 17H1V7.500h5M6 17V.7h5V17M11 3.500h5V7" stroke={INK} strokeWidth="1.200" />
        <path d="M10 9v7.500c0 1 1.800 1.800 4 1.800s4-.8 4-1.800V9" fill="#fff" stroke="#e07b1f" strokeWidth="1.200" />
        <ellipse cx="14" cy="9" rx="4" ry="1.700" fill="#fff" stroke="#e07b1f" strokeWidth="1.200" />
      </Svg>
      <Svg w={19} h={20} className="mt-[12px] ml-px">
        <path d="M4 16H1V7.500h5M6 14V.7h5V9M11 3.500h4V5" stroke={INK} strokeWidth="1.200" />
        <path d="M9.500 13 17 5c1.500-.5 1.800.3 1.300 1.500L12 15.500z" fill="#c8c6c4" stroke={INK} />
        <path d="M3 18.500c2-.5 2-4.500 5-5 2.500 0 4 2.500 2.500 4.300C8.500 19.500 5 19.500 3 18.500z" fill="#2b88d8" stroke="#1b6ab0" />
      </Svg>
      <Svg w={17} h={17} className="mt-[13px]">
        <path d="M8.500 0v17M0 8.500h17" stroke="#111" strokeWidth="1.200" />
      </Svg>
      <div className="mt-auto flex h-[32px] w-full items-center justify-center border-t border-[#dad8d6]">
        <Svg w={20} h={20} vb="0 0 20 20">
          <path d="M8.300 1h3.400l.6 2.600 1.900 1.100 2.600-.8 1.700 3-2 1.800v2.600l2 1.800-1.700 3-2.600-.8-1.900 1.100-.6 2.600H8.300l-.6-2.600-1.900-1.100-2.600.8-1.700-3 2-1.800V8.700l-2-1.800 1.700-3 2.600.8 1.900-1.100z" stroke={INK} strokeWidth="1.300" strokeLinejoin="round" />
          <circle cx="10" cy="10" r="3" stroke={INK} strokeWidth="1.300" />
        </Svg>
      </div>
    </aside>
  );
}

/* ---------- status bar ---------- */

function StatusBar() {
  return (
    <footer className="flex h-6 shrink-0 items-center border-t border-[#dad8d6] bg-[#f3f2f1] text-[12px] whitespace-nowrap text-[#484644]">
      <span className="ml-[4px] w-[958px] pt-[2px] tracking-[-0.018em]">Page 4 of 5</span>
      <Svg w={124} h={14}>
        <path d="M2 7.500h3.500M115.500 7.500h7M119 4v7" stroke="#3b3a39" strokeWidth="1.200" />
        <path d="M9.500 7.500h99M59.500 4v7" stroke="#605e5c" />
        <path d="M41 2h4v11h-4z" fill="#605e5c" />
      </Svg>
      <span className="ml-[12px] w-[24px] text-[12px] tracking-[-0.04em] text-[#605e5c]">70%</span>
      <Svg w={16} h={12} className="ml-[18px]">
        <path d="M.6.600h14.800v10.800H.6z" stroke="#605e5c" strokeWidth="1.100" />
        <path d="M6 3H3v2M10 3h3v2M6 9H3V7M10 9h3V7" stroke="#605e5c" />
      </Svg>
      <span className="ml-[14px] pt-[2px] tracking-[-0.021em]">Update available (click to download)</span>
    </footer>
  );
}

/* ---------- taskbar ---------- */

function App9({ children, className = "" }: { className?: string } & Kids) {
  return <div className={`flex h-[40px] w-[49px] shrink-0 items-center justify-center ${className}`}>{children}</div>;
}

function RunningMark() {
  return <span className="absolute bottom-0 h-[2px] w-[40px] bg-[#76b9ed]" />;
}

function Taskbar() {
  return (
    <div className="flex h-[41px] shrink-0 items-center border-t border-black bg-gradient-to-r from-[#37291f] via-[#3a2422] to-[#352a23] text-white">
      <Svg w={16} h={16} className="ml-[16px]">
        <path d="M0 2.300 6.500 1.400v6.200H0zM7.300 1.300 16 0v7.600H7.300zM0 8.400h6.500v6.200L0 13.700zM7.300 8.400H16V16l-8.700-1.300z" fill="#fff" />
      </Svg>
      <div className="ml-[16px] flex h-[40px] w-[288px] items-center border border-[#5c5552] bg-[#333231]">
        <Svg w={17} h={18} className="ml-[11px]">
          <circle cx="10.500" cy="6.500" r="5.500" stroke="#e8e8e8" strokeWidth="1.200" />
          <path d="M6.800 10.800 1 17" stroke="#e8e8e8" strokeWidth="1.200" />
        </Svg>
        <span className="ml-[11px] w-[187px] text-[14px] tracking-[-0.006em] text-[#dedcda]">Type here to search</span>
        <Svg w={38} h={38}>
          <path d="M4 14 12 9l22 1 2 5-3 4H4z" fill="#cf3b2d" />
          <path d="M4 14.500h32l-1 5-30 .5z" fill="#e0523f" />
          <path d="M10 13l3-2h18l1 2z" fill="#7c1f18" />
          <path d="M15 2.500 25 0l3 11.500-12.500 1z" fill="#e9e9ee" />
          <path d="M17.500 6.500l3 3 5-6" stroke="#2fae4a" strokeWidth="2.200" />
          <path d="M5 20l29-1 1 16-26 2z" fill="#f4f4f4" />
          <path d="M5.500 22.500 34 21v3.500L6 26.500z" fill="#d83a2e" />
          <path d="M6 30l28-2v8l-26 2z" fill="#2b5fb0" />
          <path d="M9 33.500h24" stroke="#fff" strokeWidth="1.600" strokeDasharray="2 3" />
        </Svg>
      </div>
      <App9>
        <Svg w={17} h={15}>
          <path d="M1 0v2.500h10V0M1 15v-2.500h10V15M1 4.500h10v6H1zM14.500 0v3.500M14.500 11v4" stroke="#fff" strokeWidth="1.200" />
          <path d="M13.500 5h2.500v3h-2.500z" fill="#fff" />
        </Svg>
      </App9>
      <App9 className="relative">
        <Svg w={24} h={20} className="ml-[2px]">
          <path d="M1 1h8l2 2.500h12V19H1z" fill="#e8a317" />
          <path d="M1 4.500h22V19H1z" fill="#ffd45e" />
          <path d="M5 19v-8h14v8h-4v-4H9v4z" fill="#3f8fd6" />
        </Svg>
        <RunningMark />
      </App9>
      <App9 className="ml-px">
        <Svg w={24} h={24} className="ml-px">
          <defs>
            <linearGradient id="edgeA" x1="0" y1="0" x2="1" y2=".6">
              <stop offset="0" stopColor="#2aa6ea" /><stop offset=".6" stopColor="#35c1c0" /><stop offset="1" stopColor="#67e05c" />
            </linearGradient>
          </defs>
          <circle cx="12" cy="12" r="11.800" fill="#1273c4" />
          <path d="M.4 11C1.500 4 6.500.2 12.300.2 19 .2 24 5 24 10.500c0 4-3 6-6 6-2.500 0-3.700-1-3.700-2 0-.8 1-1.300 1-3C15.300 8.500 12 6.500 8.500 6.500 4.500 6.500 1.500 8.500.4 11z" fill="url(#edgeA)" />
          <path d="M9 11.500c-3 5 0 11.500 7 11.700 3-1 5.500-3 6.500-5.500C18 20 12 19 11 14c-.2-1.300.3-2.500 1-3.300-1-.5-2.300-.2-3 .8z" fill="#0b4f9e" />
        </Svg>
      </App9>
      <App9>
        <Svg w={24} h={24}>
          <path d="M7.500 6V1.500h9V6" stroke="#28a8ea" strokeWidth="2" />
          <path d="M.8 5.500h22.400V20q0 3-3 3H3.800q-3 0-3-3z" fill="#f7f7f7" />
          <path d="M7.500 9h4v4h-4z" fill="#e84a27" />
          <path d="M12.500 9h4v4h-4z" fill="#7fba00" />
          <path d="M7.500 14h4v4h-4z" fill="#1ba1e2" />
          <path d="M12.500 14h4v4h-4z" fill="#fdb913" />
        </Svg>
      </App9>
      <App9>
        <Svg w={26} h={23}>
          <path d="M1 8 13 0l12 8v3H1z" fill="#1066b5" />
          <path d="M3 8h20v10H3z" fill="#e7f3fb" />
          <path d="M1 8l12 8.500L25 8v14H1z" fill="#2ba0e8" />
          <path d="M1 22 13 13l12 9z" fill="#5bc3f5" />
          <path d="M2.500 8h21L13 16z" fill="#e7f3fb" />
        </Svg>
      </App9>
      <App9>
        <Svg w={24} h={24}>
          <defs>
            <linearGradient id="ffA" x1=".8" y1="0" x2=".3" y2="1">
              <stop offset="0" stopColor="#ffe14a" /><stop offset=".5" stopColor="#ff8a26" /><stop offset="1" stopColor="#f5305f" />
            </linearGradient>
          </defs>
          <path d="M14 0c2 1 4 3 4.500 5.500 2 .5 4.500 4 4.500 8A10.800 10.800 0 0 1 12 24 11 11 0 0 1 1 13C1 9 2.500 5.500 4.500 3.500c0 1 .3 2 1 2.500C8 5 9 5 10.500 5.500 11 3 12 1 14 0z" fill="url(#ffA)" />
          <circle cx="12.500" cy="13.500" r="5.200" fill="#7a3fe0" />
          <path d="M5 8.500c3-1.500 5 0 7.500.5-1 2-4 1.500-4 4.500-2-1-3-3-3.500-5z" fill="#ff9a2a" />
        </Svg>
      </App9>
      <App9 className="relative">
        <Svg w={24} h={24}>
          <circle cx="12" cy="12" r="11.800" fill="#fbc116" />
          <path d="M1.800 6A11.800 11.800 0 0 1 22.200 6H12L7 15z" fill="#e33b2e" />
          <path d="M1.800 6A11.800 11.800 0 0 0 11 23.800l5.500-9L7 15z" fill="#2da94f" />
          <circle cx="12" cy="12" r="5.700" fill="#fff" />
          <circle cx="12" cy="12" r="4.500" fill="#3b7ded" />
        </Svg>
        <RunningMark />
      </App9>
      <App9 className="border-b-2 border-[#76b9ed] bg-[#5f5149]">
        <Svg w={20} h={24}>
          <path d="M11 0h7q1.500 0 1.500 1.500V24H11z" fill="#dd9b13" />
          <path d="M6 6.500h6.500Q14 6.500 14 8v16H6z" fill="#f0c237" />
          <path d="M.5 13.500Q.5 12 2 12h5q1.500 0 1.500 1.500V24H2Q.5 24 .5 22.500z" fill="#f8dd6b" />
        </Svg>
      </App9>
      <App9 className="relative">
        <Svg w={25} h={22} className="ml-px">
          <path d="M7 0h17.500v22H7z" fill="#21a366" />
          <path d="M7 5.500h9V11H7z" fill="#107c41" />
          <path d="M16 11h8.500v11H16z" fill="#107c41" />
          <path d="M7 16h17.500v6H7z" fill="#185c37" />
          <path d="M16 0h8.500v5.500H16z" fill="#33c481" />
          <path d="M0 5h12.500v12.500H0z" fill="#0e703a" />
          <path d="M3.500 7.500l5.500 7.500M9 7.500 3.500 15" stroke="#fff" strokeWidth="1.900" />
        </Svg>
        <RunningMark />
      </App9>
      <Svg w={20} h={20} className="ml-[240px]">
        <path d="M3 2.500 10 0l7 2.500 1.500 3-1 8L10 20l-7.500-6.500-1-8z" fill="#2b2b2d" stroke="#d6d6d8" strokeWidth="1.100" />
        <path d="M1 16 18.500 2.500M4.500 4.500l2 7M8 4l2.500 8M5 9.500l9-4M12 4l2.500 7M8 14l7-4.500M7.500 16l6-3" stroke="#e6e6e8" strokeWidth="1.200" />
      </Svg>
      <span className="ml-[10px] w-[69px] text-[13px] tracking-[-0.01em]">Result</span>
      <Svg w={12} h={7} className="-ml-[6px]">
        <path d="M.8 6.300 6 1l5.200 5.300" stroke="#fff" strokeWidth="1.200" />
      </Svg>
      <Svg w={14} h={16} className="ml-[11px]">
        <rect x="2" y="4.500" width="7" height="7" rx="1" stroke="#fff" strokeWidth="1.200" />
        <path d="M9 7.300l3-1.500v4.500L9 9M3 1.500q3-1.500 6 0M3 14.500q3 1.500 6 0" stroke="#fff" strokeWidth="1.200" />
      </Svg>
      <Svg w={17} h={14} className="ml-[9px]">
        <path d="M2 3.500h12.500v7H2zM0 5.500v3" stroke="#fff" strokeWidth="1.200" />
        <path d="M3.500 5h4v4h-4z" fill="#fff" />
        <circle cx="11.500" cy="9" r="4.600" fill="#1ba138" />
        <path d="M11.500 6.500v5.500M9.800 9.500h3.400" stroke="#fff" />
      </Svg>
      <Svg w={17} h={14} className="ml-[6px]">
        <path d="M1 5h2.500L7 1.500v11L3.500 9H1z" stroke="#fff" strokeWidth="1.100" />
        <path d="M9 5q1.300 2 0 4M11.300 3.300q2.500 3.700 0 7.400" stroke="#fff" strokeWidth="1.100" />
        <path d="M13.700 1.500q3.600 5.500 0 11" stroke="#8f8783" strokeWidth="1.100" />
      </Svg>
      <Svg w={18} h={17} className="ml-[8px]">
        <path d="M1 3 15.500 1v13L1 13z" stroke="#fff" strokeWidth="1.200" />
        <path d="M5 6.500q3-3 5.500 0M11 4.500v2.300H8.700M11 9q-3 3-5.500 0M5 11.300V9h2.300" stroke="#fff" strokeWidth="1.100" />
        <circle cx="13.300" cy="12.500" r="3.700" fill="#f7941d" />
      </Svg>
      <Svg w={14} h={14} className="ml-[8px]">
        <path d="M1 13A12 12 0 0 1 13 1M4 13.300A9 9 0 0 1 13 4.500M7 13.500A6.500 6.500 0 0 1 13 8" stroke="#d8d5d3" strokeWidth="1.100" />
        <circle cx="11.700" cy="12" r="1.600" fill="#fff" />
      </Svg>
      <div className="ml-[7px] w-[56px] text-center text-[11.500px] leading-[18px] tracking-[-0.03em] whitespace-nowrap">
        6:09 AM
        <br />
        11/5/2024
      </div>
      <Svg w={17} h={17} className="ml-[16px]">
        <path d="M.7 1h15.600v11.500h-5L8.500 15.500l-2.700-3H.7z" stroke="#fff" strokeWidth="1.200" />
      </Svg>
      <span className="ml-[19px] h-[40px] w-px bg-[#6d6460]" />
    </div>
  );
}

export default function App() {
  return (
    <div className="flex h-[768px] w-[1366px] flex-col overflow-hidden bg-[#f3f2f1] font-['Open_Sans','Noto_Sans',sans-serif] tracking-[-0.025em]">
      <TitleBar />
      <RibbonTabs />
      <Ribbon />
      <main className="flex h-[543px] shrink-0">
        <LeftRail />
        <div className="flex w-[1111px] shrink-0 flex-col">
          <div className="flex h-[508px] shrink-0">
            <Canvas />
            <FiltersPane />
          </div>
          <PageTabs />
        </div>
        <DataPane />
        <RightRail />
      </main>
      <StatusBar />
      <Taskbar />
    </div>
  );
}
